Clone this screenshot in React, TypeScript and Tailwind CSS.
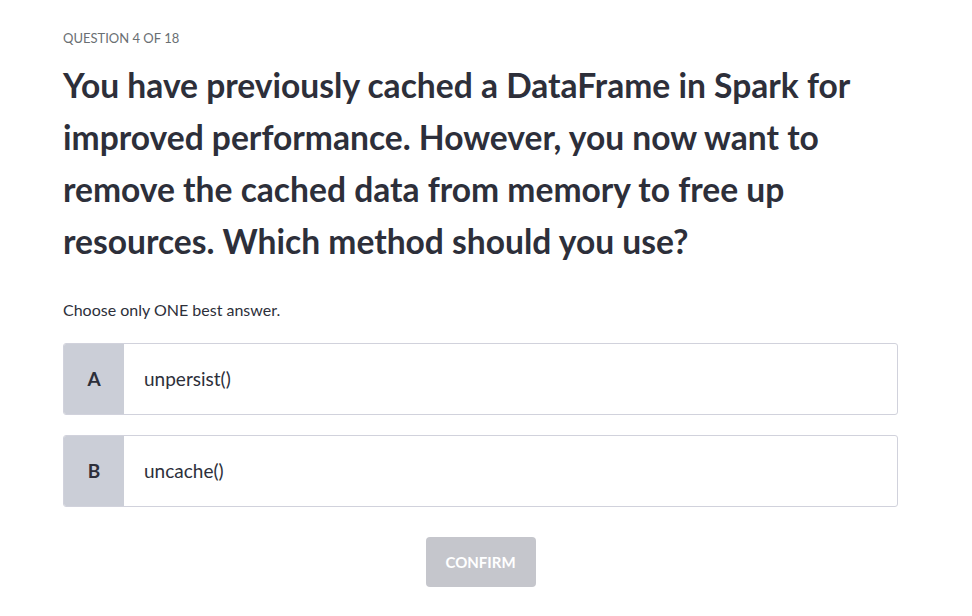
const options = [
  { key: 'A', label: 'unpersist()' },
  { key: 'B', label: 'uncache()' },
];

export default function App() {
  return (
    <div className="min-h-screen w-full bg-white font-['Lato','Open_Sans',sans-serif] text-[#2d2f3a]">
      <div className="w-[835px] ml-[63px] pt-[30px]">
        {/* Header */}
        <div className="text-[13px] leading-[16px] text-[#6a6f73]">QUESTION 4 OF 18</div>
        <h1 className="mt-[13px] text-[33.6px] leading-[52px] font-bold">
          You have previously cached a DataFrame in Spark for improved performance. However, you now want to remove
          the cached data from memory to free up resources. Which method should you use?
        </h1>

        <p className="mt-[33px] text-[16px] leading-[20px] text-[#2d2f3a]">Choose only ONE best answer.</p>

        {/* Options */}
        <div className="mt-[23px] flex flex-col gap-[20px]">
          {options.map((o) => (
            <button
              key={o.key}
              className="flex h-[72px] w-full overflow-hidden rounded-[3px] border border-[#d1d2dc] bg-white text-left"
            >
              <div className="flex w-[60px] items-center justify-center bg-[#cbced7] text-[19px] font-bold">
                {o.key}
              </div>
              <div className="flex items-center pl-[20px] text-[19px]">{o.label}</div>
            </button>
          ))}
        </div>

        <div className="mt-[30px] flex justify-center">
          <button className="h-[50px] w-[110px] rounded-[4px] bg-[#c5c6cc] text-[15px] font-bold text-white">
            CONFIRM
          </button>
        </div>
      </div>
    </div>
  );
}
